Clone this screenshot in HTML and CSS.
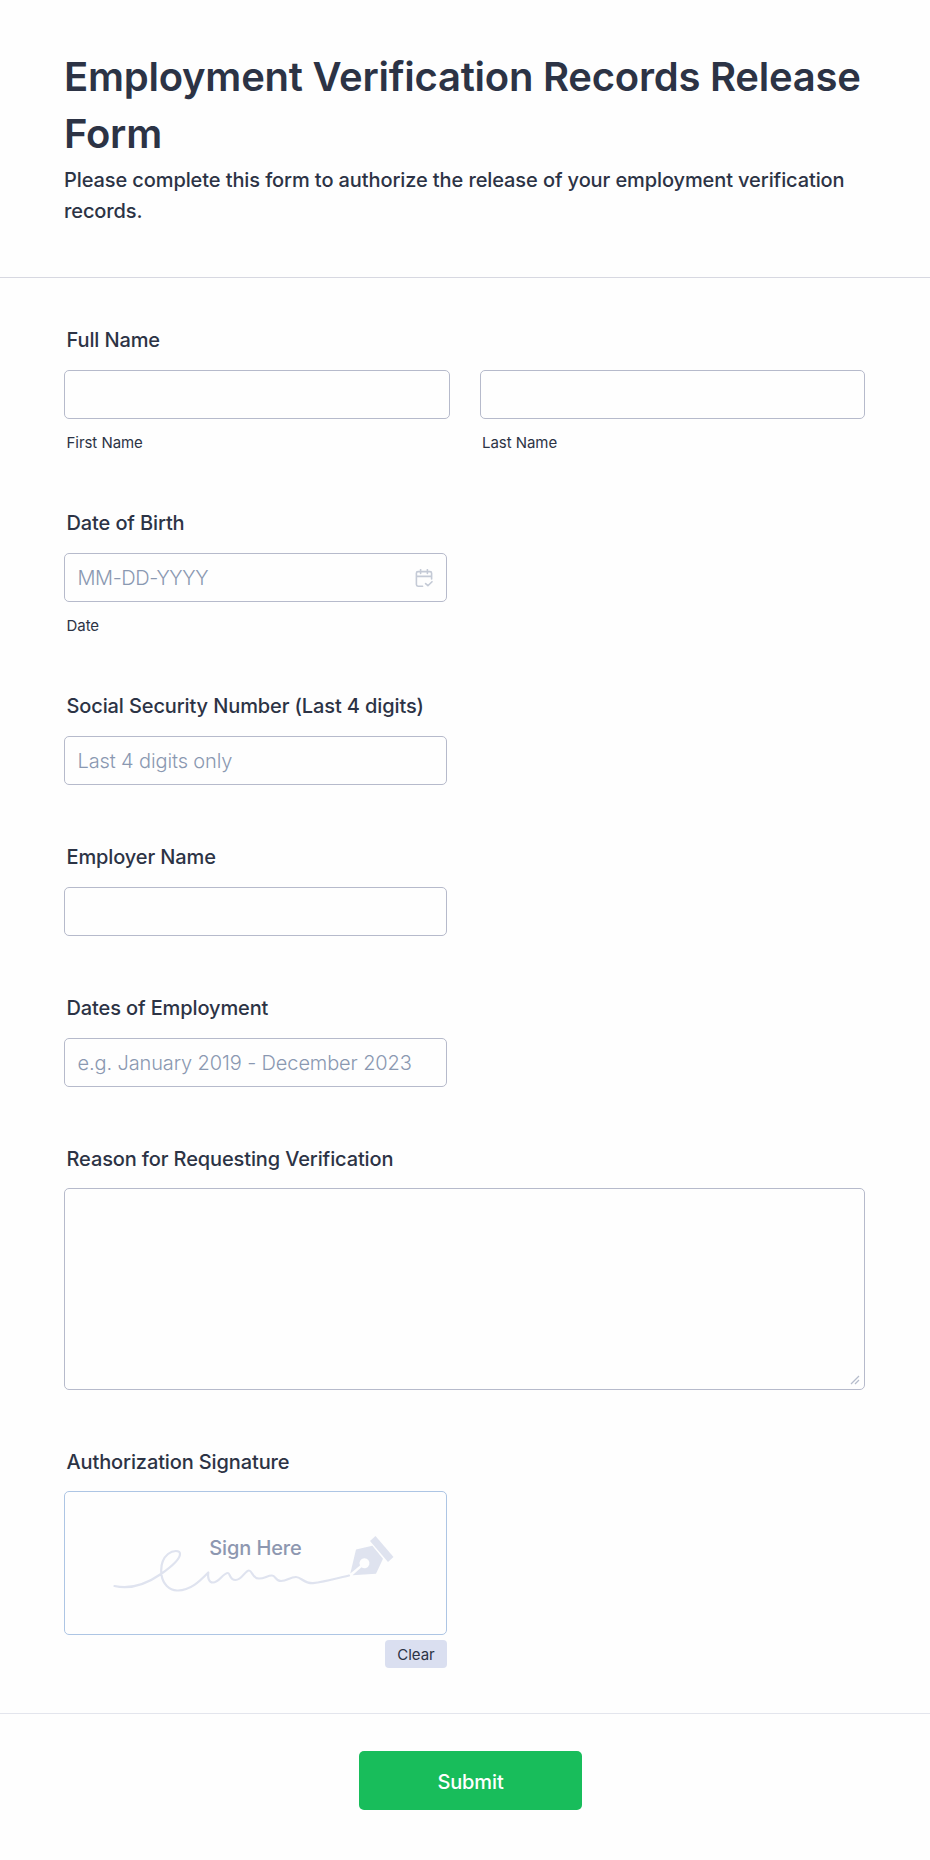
FILE: index.html
```html
<!DOCTYPE html>
<html lang="en">
<head>
    <meta charset="UTF-8">
    <meta name="viewport" content="width=device-width, initial-scale=1.0">
    <title>Employment Verification Records Release Form</title>
    <link rel="stylesheet" href="styles.css">
</head>
<body>

    <form id="releaseForm">
        <div class="form-header">
            <h1>Employment Verification Records Release Form</h1>
            <p>Please complete this form to authorize the release of your employment verification records.</p>
        </div>

        <div class="form-body">
            <div class="field">
                <label for="firstName">Full Name</label>
                <div class="name-row">
                    <div class="name-col">
                        <input type="text" id="firstName" name="firstName">
                        <span class="sub-label">First Name</span>
                    </div>
                    <div class="name-col">
                        <input type="text" id="lastName" name="lastName">
                        <span class="sub-label">Last Name</span>
                    </div>
                </div>
            </div>

            <div class="field">
                <label for="birthDate">Date of Birth</label>
                <div class="date-box half">
                    <input type="text" id="birthDate" class="date-input" name="birthDate" placeholder="MM-DD-YYYY">
                    <svg class="date-icon" width="18" height="19" viewBox="0 0 18 19">
                        <path d="M7.6 17.2H3a1.6 1.6 0 0 1-1.6-1.6V4.2A1.6 1.6 0 0 1 3 2.6h12a1.6 1.6 0 0 1 1.6 1.6V10M1.4 7.4h15.2M5.6.6v3.8M12.4.6v3.8M10.6 14.6l2.3 2.1 4.1-4"/>
                    </svg>
                </div>
                <span class="sub-label">Date</span>
            </div>

            <div class="field">
                <label for="ssn">Social Security Number (Last 4 digits)</label>
                <input class="half" type="text" id="ssn" name="ssn" placeholder="Last 4 digits only">
            </div>

            <div class="field">
                <label for="employer">Employer Name</label>
                <input class="half" type="text" id="employer" name="employer">
            </div>

            <div class="field">
                <label for="employmentDates">Dates of Employment</label>
                <input class="half" type="text" id="employmentDates" name="employmentDates" placeholder="e.g. January 2019 - December 2023">
            </div>

            <div class="field">
                <label for="reason">Reason for Requesting Verification</label>
                <div class="textarea-box">
                    <textarea id="reason" name="reason"></textarea>
                    <svg class="grip" width="10" height="10" viewBox="0 0 10 10">
                        <path d="M1 9L9 1M5 9l4-4"/>
                    </svg>
                </div>
            </div>

            <div class="field signature half">
                <label>Authorization Signature</label>
                <div class="sign-pad">
                    <svg class="sign-art" width="382" height="141" viewBox="65 1492 382 141">
                        <!-- signature stroke -->
                        <path class="stroke" d="M114.500 1586C132 1590 148 1583 161 1574C171 1567 180 1560 180 1554C180 1550 173 1550 168 1554C162 1559 160.500 1567 161.500 1575C163 1584 169 1590 177 1590.500C190 1591 200 1581 208.300 1572.500C207.500 1578 209 1582.500 213 1582.500C219 1582.500 223 1573 228 1573C230 1573 229.500 1580 235.500 1580C242 1580 245 1570.500 249 1570.500C252.500 1570.500 252 1578.500 259 1578.500C265 1578.500 267 1575.500 272 1575.500C276 1575.500 275 1581 281 1581C287 1581 290 1577 296 1577C301 1577 304 1583.500 313 1583.200C324 1582 338 1578 349 1575.500"/>
                        <!-- pen nib -->
                        <path class="nib" d="M356 1549.400L372.300 1545.800L383 1558.800L376 1573.800L352.500 1575.200L361.500 1567.200A5 5 0 1 0 360 1565.400L350.300 1573.600Z"/>
                        <path class="nib" d="M370 1541L375.500 1536L393.500 1557L388 1562Z"/>
                    </svg>
                    <span class="sign-text">Sign Here</span>
                </div>
                <button type="button" class="clear-button">Clear</button>
            </div>
        </div>

        <div class="form-footer">
            <button type="submit" class="submit-button">Submit</button>
        </div>
    </form>

</body>
</html>
```
FILE: styles.css
```css
* {
    box-sizing: border-box;
}

body {
    margin: 0;
    background-color: #fefefe;
    color: #2c3345;
    font-family: Inter, "Open Sans", sans-serif;
    font-size: 20px;
}

.form-header {
    height: 278px;
    padding: 48px 64px 0;
    border-bottom: 1px solid #d7d8e1;
}

h1 {
    margin: 0;
    font-size: 40px;
    font-weight: 600;
    line-height: 57px;
    letter-spacing: -0.24px;
}

.form-header p {
    margin: 3px 0 0;
    font-weight: 500;
    line-height: 31px;
    letter-spacing: -0.1px;
}

.form-body {
    display: flex;
    flex-direction: column;
    gap: 60px;
    padding: 50px 65px 45px 64px;
}

.field {
    display: flex;
    flex-direction: column;
}

label {
    margin: 0 0 18px 2.5px;
    font-weight: 500;
    line-height: 24px;
    letter-spacing: -0.12px;
}

input, textarea {
    display: block;
    width: 100%;
    height: 49px;
    margin: 0;
    padding: 0 12.5px;
    border: 1px solid #b6bacb;
    border-radius: 5px;
    background-color: #fefefe;
    color: #2c3345;
    font-family: inherit;
    font-size: 20px;
}

input::placeholder {
    color: #8a98b1;
    font-weight: 300;
    letter-spacing: -0.12px;
    opacity: 1;
}

.date-input::placeholder {
    letter-spacing: -0.4px;
}

.half {
    width: 383px;
}

.name-row {
    display: flex;
    gap: 30px;
}

.name-col {
    flex: 1;
}

.sub-label {
    display: block;
    margin: 15px 0 0 2.5px;
    font-size: 15px;
    line-height: 17px;
    letter-spacing: -0.05px;
}

.date-box, .textarea-box, .sign-pad {
    position: relative;
}

.date-icon {
    position: absolute;
    top: 15.5px;
    right: 14px;
}

.date-icon path {
    fill: none;
    stroke: #c4cad6;
    stroke-width: 1.6;
    stroke-linecap: round;
    stroke-linejoin: round;
}

.textarea-box {
    margin-top: -1px;
}

textarea {
    height: 202px;
    resize: none;
}

.grip {
    position: absolute;
    right: 5px;
    bottom: 5px;
}

.grip path {
    fill: none;
    stroke: #b5bccb;
    stroke-width: 1.2;
}

.sign-pad {
    height: 144px;
    margin-top: -1px;
    border: 1px solid #adc5e4;
    border-radius: 5px;
}

.sign-art {
    display: block;
}

.stroke {
    fill: none;
    stroke: #dfe3ef;
    stroke-width: 2.2;
    stroke-linecap: round;
    stroke-linejoin: round;
}

.nib {
    fill: #dfe3ef;
}

.sign-text {
    position: absolute;
    top: 44px;
    left: 0;
    width: 100%;
    text-align: center;
    color: #8d97b0;
    font-weight: 500;
    line-height: 24px;
    letter-spacing: -0.12px;
}

button {
    border: none;
    font-family: inherit;
    cursor: pointer;
}

.clear-button {
    align-self: flex-end;
    width: 62px;
    height: 28px;
    margin-top: 5px;
    padding: 1px 0 0;
    border-radius: 4px;
    background-color: #dadff0;
    color: #2c3345;
    font-size: 15px;
}

.form-footer {
    display: flex;
    justify-content: center;
    padding: 37px 0 50px 11px;
    border-top: 1px solid #e3e5ed;
}

.submit-button {
    width: 223px;
    height: 59px;
    padding: 2px 0 0;
    border-radius: 5px;
    background-color: #18bd5b;
    color: #fff;
    font-size: 20px;
    font-weight: 500;
    letter-spacing: -0.12px;
}
```
